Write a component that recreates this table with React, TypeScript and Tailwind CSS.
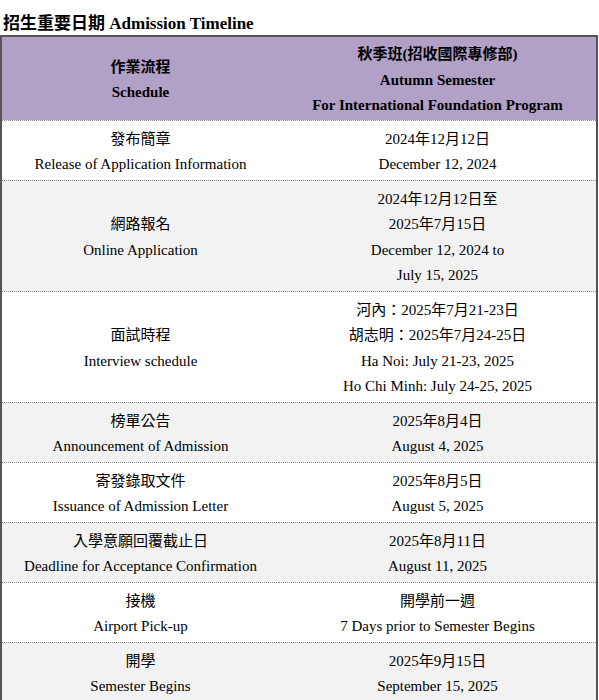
const rows: { zh: string; en: string; dates: string[]; shade: boolean }[] = [
  { zh: "發布簡章", en: "Release of Application Information", dates: ["2024年12月12日", "December 12, 2024"], shade: false },
  {
    zh: "網路報名",
    en: "Online Application",
    dates: ["2024年12月12日至", "2025年7月15日", "December 12, 2024 to", "July 15, 2025"],
    shade: true,
  },
  {
    zh: "面試時程",
    en: "Interview schedule",
    dates: ["河內：2025年7月21-23日", "胡志明：2025年7月24-25日", "Ha Noi: July 21-23, 2025", "Ho Chi Minh: July 24-25, 2025"],
    shade: false,
  },
  { zh: "榜單公告", en: "Announcement of Admission", dates: ["2025年8月4日", "August 4, 2025"], shade: true },
  { zh: "寄發錄取文件", en: "Issuance of Admission Letter", dates: ["2025年8月5日", "August 5, 2025"], shade: false },
  { zh: "入學意願回覆截止日", en: "Deadline for Acceptance Confirmation", dates: ["2025年8月11日", "August 11, 2025"], shade: true },
  { zh: "接機", en: "Airport Pick-up", dates: ["開學前一週", "7 Days prior to Semester Begins"], shade: false },
  { zh: "開學", en: "Semester Begins", dates: ["2025年9月15日", "September 15, 2025"], shade: true },
]

export default function App() {
  return (
    <div className="min-h-[700px] w-[599px] overflow-hidden bg-white text-[15px] text-black [font-family:'Liberation_Serif','Noto_Sans_CJK_TC',serif]">
      {/* Title */}
      <div className="flex h-[35px] items-end pl-[3px] text-[17px] leading-[22px] font-bold">招生重要日期 Admission Timeline</div>

      <table className="w-[598px] border-collapse border-x-2 border-t-2 border-[#555]">
        <thead>
          <tr className="bg-[#b2a1c7] font-bold">
            <th className="w-[278px] border-b border-dotted border-[#888] pt-[5px] pb-[1px] text-center leading-[25.5px]">
              <div>作業流程</div>
              <div>Schedule</div>
            </th>
            <th className="border-b border-dotted border-[#888] pt-[5px] pb-[1px] text-center leading-[25.5px]">
              <div>秋季班(招收國際專修部)</div>
              <div>Autumn Semester</div>
              <div>For International Foundation Program</div>
            </th>
          </tr>
        </thead>
        <tbody>
          {rows.map((r) => (
            <tr key={r.en} className={r.shade ? "bg-[#f2f2f2]" : "bg-white"}>
              <td className="border-b border-dotted border-[#888] pt-[6px] pb-[2px] text-center align-middle leading-[25.5px]">
                <div>{r.zh}</div>
                <div>{r.en}</div>
              </td>
              <td className="border-b border-dotted border-[#888] pt-[6px] pb-[2px] text-center align-middle leading-[25.5px]">
                {r.dates.map((d) => (
                  <div key={d}>{d}</div>
                ))}
              </td>
            </tr>
          ))}
        </tbody>
      </table>
    </div>
  )
}
